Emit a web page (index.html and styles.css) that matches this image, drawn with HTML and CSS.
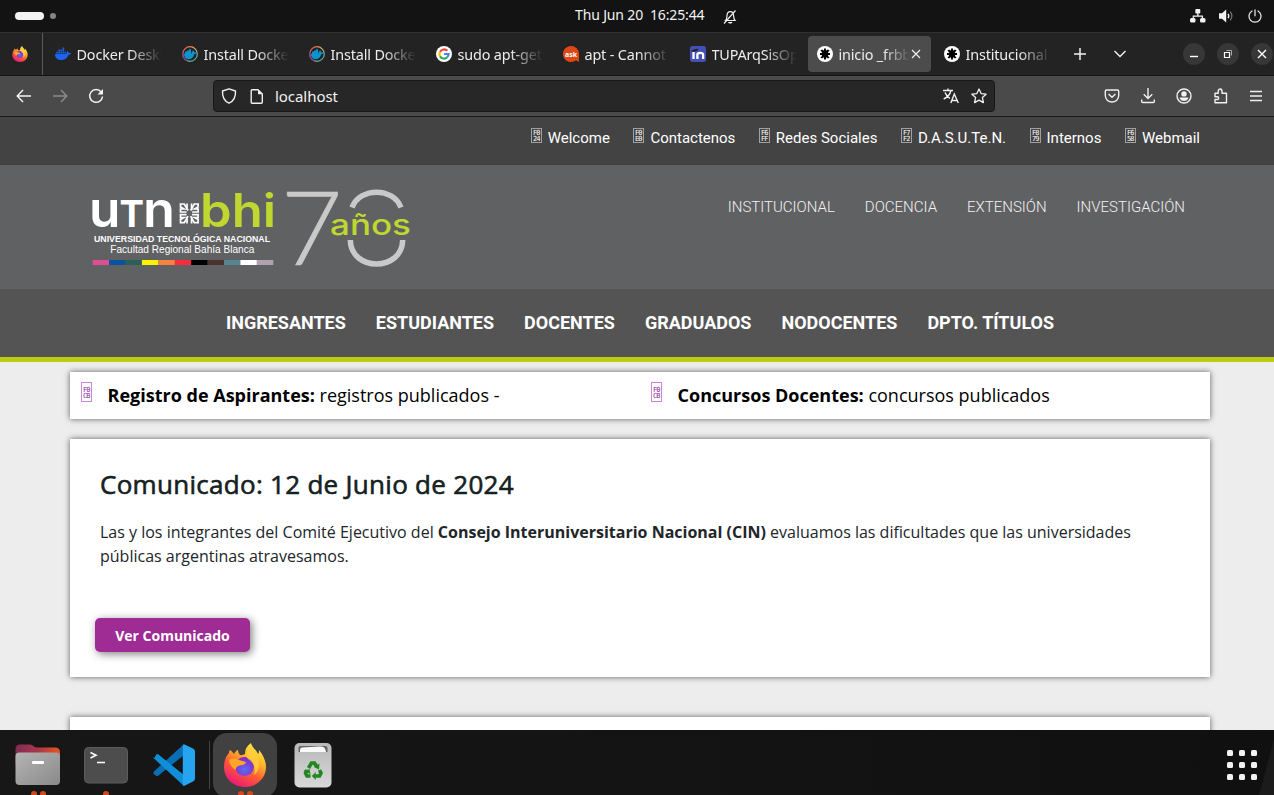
FILE: index.html
```html
<!DOCTYPE html>
<html lang="es">
<head>
<meta charset="utf-8">
<title>inicio _frbb</title>
<link rel="stylesheet" href="styles.css">
</head>
<body>
<svg class="defs" width="0" height="0" aria-hidden="true">
  <defs>
    <linearGradient id="flame" x1="0.8" y1="0" x2="0.25" y2="1"><stop offset="0" stop-color="#fff44f"/><stop offset=".35" stop-color="#ffb02a"/><stop offset=".62" stop-color="#ff5a36"/><stop offset="1" stop-color="#e9127c"/></linearGradient>
    <radialGradient id="globe" cx=".5" cy=".65" r=".6"><stop offset="0" stop-color="#5b6df0"/><stop offset="1" stop-color="#8a28c8"/></radialGradient>
    <linearGradient id="ring" x1="0" y1="0" x2="1" y2="1"><stop offset="0" stop-color="#e8384f"/><stop offset=".4" stop-color="#f2a65a"/><stop offset="1" stop-color="#19b5c9"/></linearGradient>
    <linearGradient id="folderBack" x1="0" x2="1"><stop offset="0" stop-color="#832b56"/><stop offset=".5" stop-color="#a8374b"/><stop offset="1" stop-color="#e95420"/></linearGradient>
    <linearGradient id="folderFront" x1="0" y1="0" x2="1" y2="1"><stop offset="0" stop-color="#b4b4b4"/><stop offset="1" stop-color="#8a8a8a"/></linearGradient>
    <linearGradient id="bin" x1="0" y1="0" x2="0" y2="1"><stop offset="0" stop-color="#b9b9b9"/><stop offset="1" stop-color="#d8d8d8"/></linearGradient>
    <symbol id="firefox" viewBox="0 0 42 44">
      <path fill="url(#flame)" d="M27 0c1 5 5 6 7 11 1-1 1-2 1-4 5 6 7 12 7 17 0 11-9 20-21 20S0 35 0 24c0-7 3-12 5-14 0-1 0-2 1-3 2 1 3 3 4 4 1-2 3-4 4-4 0 2 1 4 2 5 2 0 3 0 5-1 0-5 2-8 6-11z"/>
      <circle cx="20.500" cy="23.500" r="9.500" fill="url(#globe)"/>
      <path fill="#ffa629" d="M5 17c3-2 7-2 10 0l7 2c-1 3-4 3-6 3.500-3 .5-4 2-4.500 4.500C8.500 25 5 21 5 17z"/>
      <path fill="#ffd23a" opacity=".8" d="M27 3c1 6 8 9 8 19 0 4-2 8-5 10 2-8-1-13-6-16-3-4-1-9 3-13z"/>
    </symbol>
    <symbol id="whale" viewBox="0 0 16 16">
      <path d="M0 8h11.500c.2-1 .1-2 .8-3 1 .5 1.400 1.200 1.500 2 .8-.1 1.600 0 2.200.4-.4 1-1.300 1.300-2.500 1.300C12.500 11.500 10.500 14 6.500 14 2.500 14 0 12 0 8zM1.200 5.700h1.700v1.700H1.200zM3.300 5.700H5v1.700H3.300zM5.400 5.700h1.700v1.700H5.400zM7.500 5.700h1.700v1.700H7.500zM3.300 3.600H5v1.700H3.300zM5.400 3.600h1.700v1.700H5.400zM7.500 3.600h1.700v1.700H7.500zM7.500 1.500h1.700v1.700H7.500zM9.600 5.700h1.500v1.700H9.600z"/>
    </symbol>
    <symbol id="dockerdocs" viewBox="0 0 16 16">
      <circle cx="8" cy="8" r="7.300" fill="none" stroke="url(#ring)" stroke-width="1.200"/>
      <path fill="none" stroke="#703a94" stroke-width="1.200" d="M1.200 5.400A7.300 7.300 0 0 0 5 14.700"/>
      <path fill="#0d93ce" d="M2 7.800h7.500V6.300l1.700-2 1.200 2 2 .2c-.3 1.200-1 1.600-2.200 1.700-1 3.300-2.700 5-5.400 5C3.800 13.200 2 11 2 7.800zM3.500 5.500H5V4.500h2V3.200h2V8H3V6z"/>
    </symbol>
    <symbol id="spider" viewBox="0 0 16 16">
      <circle cx="8" cy="8" r="8" fill="#fff"/>
      <path fill="none" stroke="#000" stroke-width="1.900" d="M8 2.500v11M3 8h10M4.300 4c1 2.200 6.400 2.200 7.400 0M4.300 12c1-2.200 6.400-2.200 7.400 0"/>
      <circle cx="8" cy="8" r="3.300"/>
    </symbol>
  </defs>
</svg>

<header class="topbar">
  <div class="workspaces"><i class="pill"></i><i class="dot"></i></div>
  <div class="clock"><span class="clock-text">Thu Jun 20&nbsp; 16:25:44</span>
    <svg class="bell" width="14" height="16" viewBox="0 0 14 16"><path fill="none" stroke="#eee" stroke-width="1.200" d="M2.500 11.500c1.500-1.500 1.300-3 1.500-5C4.200 4 5.500 2.600 7.300 2.600S10.500 4 10.600 6.500c.1 2 0 3.500 1.400 5zM1 14.500 12.500 1.500"/><path fill="#eee" d="M5 13h4.500c-.5 2-4 2-4.500 0z"/></svg>
  </div>
  <div class="status">
    <svg width="16" height="14" viewBox="0 0 16 14" fill="#f2f2f2"><rect x="5.300" y="0" width="5" height="4.500" rx="1"/><rect x="0" y="9" width="5.500" height="4.500" rx="1.500"/><rect x="10" y="9" width="5.500" height="4.500" rx="1.500"/><path d="M7.200 4h1.300v2.500H13V9h-1.200V7.700H3.900V9H2.700V6.500h4.500z"/></svg>
    <svg width="16" height="14" viewBox="0 0 16 14"><path fill="#f2f2f2" d="M0 4.300h3L7.200.5v13L3 9.700H0z"/><path fill="none" stroke="#f2f2f2" stroke-width="1.300" d="M9 4.800q1.600 2.200 0 4.400"/><path fill="none" stroke="#777" stroke-width="1.200" d="M11.200 2.600q3.400 4.400 0 8.800"/></svg>
    <svg width="14" height="14" viewBox="0 0 14 14"><path fill="none" stroke="#f2f2f2" stroke-width="1.200" stroke-linecap="round" d="M7 .8v6M4 2A6 6 0 1 0 10 2"/></svg>
  </div>
</header>

<nav class="tabs">
  <div class="pinned"><svg width="16" height="16"><use href="#firefox"/></svg></div>
  <div class="tab"><svg width="16" height="16" fill="#1d63ed"><use href="#whale"/></svg><span class="label">Docker Desktop</span></div>
  <div class="tab"><svg width="16" height="16"><use href="#dockerdocs"/></svg><span class="label">Install Docker</span></div>
  <div class="tab"><svg width="16" height="16"><use href="#dockerdocs"/></svg><span class="label">Install Docker</span></div>
  <div class="tab"><svg width="16" height="16" viewBox="0 0 16 16"><circle cx="8" cy="8" r="8" fill="#fff"/><g fill="none" stroke-width="2.200"><path stroke="#ea4335" d="M11.300 4.800A4.600 4.600 0 0 0 4 5.800"/><path stroke="#fbbc05" d="M4 5.800a4.600 4.600 0 0 0 0 4.400"/><path stroke="#34a853" d="M4 10.200a4.600 4.600 0 0 0 7.200 1.100"/><path stroke="#4285f4" d="M8 8h4.600a4.600 4.600 0 0 1-1.500 3.300"/></g></svg><span class="label">sudo apt-get</span></div>
  <div class="tab"><svg width="16" height="16" viewBox="0 0 16 16"><path fill="#dd4814" d="M8 0a8 8 0 0 1 8 8v8l-3-1.800A8 8 0 1 1 8 0z"/><text x="2" y="10.500" class="ask" textLength="12" lengthAdjust="spacingAndGlyphs">ask</text></svg><span class="label">apt - Cannot f</span></div>
  <div class="tab"><svg width="16" height="16" viewBox="0 0 16 16"><rect width="16" height="16" rx="2.500" fill="#4351b5"/><path fill="#222" d="M1 4.500 7 2.700l2 1.200-6 2z"/><path fill="none" stroke="#fff" stroke-width="2.300" d="M3.500 6v7M7.400 13V8.600q0-1.700 2.800-1.700t2.900 1.700V13"/></svg><span class="label">TUPArqSisOp</span></div>
  <div class="tab active"><svg width="16" height="16"><use href="#spider"/></svg><span class="label">inicio _frbb</span><svg class="close" width="10" height="10" viewBox="0 0 10 10"><path stroke="#eee" stroke-width="1.200" d="m1 1 8 8M9 1 1 9"/></svg></div>
  <div class="tab"><svg width="16" height="16"><use href="#spider"/></svg><span class="label">Institucional</span></div>
  <svg class="plus" width="12" height="12" viewBox="0 0 12 12"><path stroke="#f2f2f2" stroke-width="1.500" d="M6 0v12M0 6h12"/></svg>
  <svg class="chevron" width="12" height="8" viewBox="0 0 12 8"><path fill="none" stroke="#f2f2f2" stroke-width="1.400" d="m.5 1 5.500 5.500L11.500 1"/></svg>
  <div class="winbtns">
    <span class="winbtn"><svg width="10" height="10"><path stroke="#fff" stroke-width="1.400" d="M1 7.500h8"/></svg></span>
    <span class="winbtn"><svg width="10" height="10" viewBox="0 0 10 10"><path fill="none" stroke="#fff" stroke-width="1.200" d="M1.500 3.500h5v5h-5z"/><path fill="none" stroke="#aaa" d="M3.500 1.500h5v5"/></svg></span>
    <span class="winbtn"><svg width="10" height="10" viewBox="0 0 10 10"><path stroke="#fff" stroke-width="1.400" d="m1 1 8 8M9 1 1 9"/></svg></span>
  </div>
</nav>

<div class="toolbar">
  <div class="history">
    <svg width="16" height="14" viewBox="0 0 16 14"><path fill="none" stroke="#f5f5f5" stroke-width="1.400" d="M15 7H1.500M7 1 1.200 7 7 13"/></svg>
    <svg width="16" height="14" viewBox="0 0 16 14"><path fill="none" stroke="#8c8c8c" stroke-width="1.400" d="M1 7h13.500M9 1l5.800 6L9 13"/></svg>
    <svg width="16" height="16" viewBox="0 0 16 16"><path fill="none" stroke="#f5f5f5" stroke-width="1.500" d="M13.200 4A6.400 6.400 0 1 0 14.500 8.500"/><path fill="#f5f5f5" d="M15 1v5.500H9.500z"/></svg>
  </div>
  <div class="urlbar">
    <svg width="16" height="16" viewBox="0 0 16 16"><path fill="none" stroke="#f0f0f0" stroke-width="1.400" stroke-linejoin="round" d="M8 .8 14.500 3c.3 6-1.500 10-6.500 12.200C3 13 1.200 9 1.500 3z"/></svg>
    <svg class="page" width="14" height="15" viewBox="0 0 14 15"><path fill="none" stroke="#f0f0f0" stroke-width="1.400" stroke-linejoin="round" d="M2.200.8H8L12.300 5v8.200q0 1-1 1H2.200q-1 0-1-1V1.800q0-1 1-1z"/><path fill="#f0f0f0" d="M8 .8 12.500 5.300H8z"/></svg>
    <span class="url">localhost</span>
    <svg class="translate" width="17" height="16" viewBox="0 0 17 16"><path fill="none" stroke="#f0f0f0" stroke-width="1.400" d="M0 2.500h10M5 .5v2M8 2.500C7 6.500 4 9.500.7 11M2 4.500c1 2.700 3 4.700 5 6M7.800 15l3.500-9 4 9M9 12.500h5"/></svg>
    <svg width="16" height="16" viewBox="0 0 16 16"><path fill="none" stroke="#f0f0f0" stroke-width="1.300" stroke-linejoin="round" d="m8 1 2.100 4.600 5 .6-3.700 3.400 1 5L8 12.100l-4.400 2.500 1-5L.9 6.200l5-.6z"/></svg>
  </div>
  <div class="actions">
    <svg width="16" height="16" viewBox="0 0 16 16"><path fill="none" stroke="#f0f0f0" stroke-width="1.400" stroke-linejoin="round" d="M2.500 2h11q1.200 0 1.200 1.200V7.500c0 4-3 6.500-6.700 6.500S1.300 11.500 1.300 7.500V3.200Q1.300 2 2.500 2zM4.500 6 8 9.300 11.500 6"/></svg>
    <svg width="16" height="16" viewBox="0 0 16 16"><path fill="none" stroke="#f0f0f0" stroke-width="1.400" d="M8 0v10.500M3.700 6.200 8 10.500l4.300-4.300M1.700 11.500v2q0 1 1 1h10.600q1 0 1-1v-2"/></svg>
    <svg width="16" height="16" viewBox="0 0 16 16"><circle cx="8" cy="8" r="7" fill="none" stroke="#f0f0f0" stroke-width="1.400"/><circle cx="8" cy="5.900" r="2.700" fill="#f0f0f0"/><path fill="#f0f0f0" d="M3.500 9.500h9q-1 3.500-4.500 3.500T3.500 9.500z"/></svg>
    <svg width="16" height="16" viewBox="0 0 16 16"><path fill="none" stroke="#f0f0f0" stroke-width="1.400" stroke-linejoin="round" d="M2 5.200h3.200V3.500C5.200.2 9 .2 9 3.500v1.700h4.500v9.600H2v-3.300h2.200c2 0 2-2.700 0-2.700H2z"/></svg>
    <svg width="14" height="16" viewBox="0 0 14 16"><path stroke="#f0f0f0" stroke-width="1.300" d="M1 3.500h12M1 8h12M1 12.500h12"/></svg>
  </div>
</div>

<main class="site">
  <ul class="quick">
    <li><svg class="tofu" viewBox="0 0 11 15"><rect x=".5" y=".5" width="10" height="14"/><text x="2" y="7" textLength="7.500">F0</text><text x="2" y="13" textLength="7.500">24</text></svg><span>Welcome</span></li>
    <li><svg class="tofu" viewBox="0 0 11 15"><rect x=".5" y=".5" width="10" height="14"/><text x="2" y="7" textLength="7.500">F0</text><text x="2" y="13" textLength="7.500">E0</text></svg><span>Contactenos</span></li>
    <li><svg class="tofu" viewBox="0 0 11 15"><rect x=".5" y=".5" width="10" height="14"/><text x="2" y="7" textLength="7.500">F6</text><text x="2" y="13" textLength="7.500">FF</text></svg><span>Redes Sociales</span></li>
    <li><svg class="tofu" viewBox="0 0 11 15"><rect x=".5" y=".5" width="10" height="14"/><text x="2" y="7" textLength="7.500">F7</text><text x="2" y="13" textLength="7.500">F2</text></svg><span>D.A.S.U.Te.N.</span></li>
    <li><svg class="tofu" viewBox="0 0 11 15"><rect x=".5" y=".5" width="10" height="14"/><text x="2" y="7" textLength="7.500">F8</text><text x="2" y="13" textLength="7.500">79</text></svg><span>Internos</span></li>
    <li><svg class="tofu" viewBox="0 0 11 15"><rect x=".5" y=".5" width="10" height="14"/><text x="2" y="7" textLength="7.500">F6</text><text x="2" y="13" textLength="7.500">58</text></svg><span>Webmail</span></li>
  </ul>

  <div class="brand">
    <svg class="logo" width="340" height="95" viewBox="80 180 340 95">
      <g class="utn">
        <text x="89" y="226.500" textLength="31.500" lengthAdjust="spacingAndGlyphs">u</text>
        <text class="t" x="119.500" y="226.500" textLength="24.500" lengthAdjust="spacingAndGlyphs">T</text>
        <text x="143" y="226.500" textLength="32" lengthAdjust="spacingAndGlyphs">n</text>
      </g>
      <g fill="none" stroke="#fff" stroke-width="1.700">
        <path id="lobe" d="M188 210.500 184.300 204H180.500V207L184 209H180.500V212H186.500"/>
        <use href="#lobe" transform="matrix(-1 0 0 1 378.600 0)"/>
        <use href="#lobe" transform="matrix(1 0 0 -1 0 426.600)"/>
        <use href="#lobe" transform="matrix(-1 0 0 -1 378.600 426.600)"/>
        <path d="M187 208.500v-5M191.600 208.500v-5M187 218.500v5M191.600 218.500v5"/>
      </g>
      <text class="bhi" x="200" y="226.500" textLength="76" lengthAdjust="spacingAndGlyphs">bhi</text>
      <text class="uni" x="94" y="242.300" textLength="176" lengthAdjust="spacingAndGlyphs">UNIVERSIDAD TECNOLÓGICA NACIONAL</text>
      <text class="fac" x="110.300" y="253.300" textLength="144" lengthAdjust="spacingAndGlyphs">Facultad Regional Bahía Blanca</text>
      <g>
        <path fill="#dd4e93" d="M92.700 260h16.500v5H92.700z"/><path fill="#0b51a1" d="M109.100 260h16.500v5h-16.500z"/><path fill="#2d5f59" d="M125.500 260h16.500v5h-16.500z"/><path fill="#fff200" d="M141.900 260h16.500v5h-16.500z"/><path fill="#f58243" d="M158.400 260h16.500v5h-16.500z"/><path fill="#fb2a3c" d="M174.800 260h16.500v5h-16.500z"/><path fill="#000" d="M191.200 260h16.500v5h-16.500z"/><path fill="#4b322e" d="M207.600 260h16.500v5h-16.500z"/><path fill="#558492" d="M224 260h16.500v5H224z"/><path fill="#fff" d="M240.400 260h16.500v5h-16.500z"/><path fill="#b2a2b0" d="M256.800 260h16.500v5h-16.500z"/>
      </g>
      <text class="seven" x="280.500" y="265" textLength="62" lengthAdjust="spacingAndGlyphs">7</text>
      <path fill="none" stroke="#c9c9c9" stroke-width="5.500" d="M352 207.500C360 187 393 187 401 207.500M350.300 240C351 272 402 272 402.700 240"/>
      <text class="anos" x="330" y="235" textLength="81" lengthAdjust="spacingAndGlyphs">años</text>
    </svg>
    <ul class="sections"><li>INSTITUCIONAL</li><li>DOCENCIA</li><li>EXTENSIÓN</li><li>INVESTIGACIÓN</li></ul>
  </div>

  <ul class="mainnav"><li>INGRESANTES</li><li>ESTUDIANTES</li><li>DOCENTES</li><li>GRADUADOS</li><li>NODOCENTES</li><li>DPTO. TÍTULOS</li></ul>

  <div class="content">
    <section class="card notices">
      <div class="notice"><svg class="tofu tall" viewBox="0 0 11 20"><rect x=".5" y=".5" width="10" height="19"/><text x="2" y="10" textLength="7.500">F0</text><text x="2" y="16" textLength="7.500">CB</text></svg><p><b>Registro de Aspirantes:</b> registros publicados -</p></div>
      <div class="notice"><svg class="tofu tall" viewBox="0 0 11 20"><rect x=".5" y=".5" width="10" height="19"/><text x="2" y="10" textLength="7.500">F0</text><text x="2" y="16" textLength="7.500">CB</text></svg><p><b>Concursos Docentes:</b> concursos publicados</p></div>
    </section>
    <section class="card release">
      <h2>Comunicado: 12 de Junio de 2024</h2>
      <p>Las y los integrantes del Comité Ejecutivo del <b>Consejo Interuniversitario Nacional (CIN)</b> evaluamos las dificultades que las universidades públicas argentinas atravesamos.</p>
      <button class="cta">Ver Comunicado</button>
    </section>
    <section class="card next"></section>
  </div>
</main>

<footer class="dock">
  <div class="app two"><svg width="46" height="42" viewBox="0 0 46 42"><path fill="url(#folderBack)" d="M.5 5q0-4.500 4.500-4.500h10q2 0 3.500 1.500T22 3.500h18q5 0 5 5V20H.5z"/><rect x=".5" y="8.500" width="44.500" height="32.500" rx="4" fill="url(#folderFront)"/><rect x="17" y="17" width="12" height="3" rx="1" fill="#fff"/></svg></div>
  <div class="app one"><svg width="44" height="42" viewBox="0 0 44 42"><rect x=".5" y="3.500" width="43" height="35.500" rx="4" fill="#4d4d4d" stroke="#5c5c5c"/><path fill="none" stroke="#fff" stroke-width="1.600" d="m6.500 8.500 5.500 2.800L6.500 14M13 18.500h8"/></svg></div>
  <div class="app"><svg width="42" height="42" viewBox="0 0 42 42"><path fill="#0a6eb5" d="M0 29.500 3.500 32q.8.500 1.600-.2L31 11V0L1 27.500q-1 1 0 2z"/><path fill="#108ed8" d="M1 14.500 3.500 10.200q.8-.5 1.600.1L31 31v11L1 14.500q-1-1 0-2z"/><path fill="#25a5ef" d="M31 .2 40 4.500q2 1 2 3v27q0 2-2 3L31 42q-1.200-.6-1.200-2V2q0-1.400 1.200-1.800z"/></svg></div>
  <i class="sep"></i>
  <div class="app two current"><svg width="42" height="44"><use href="#firefox"/></svg></div>
  <div class="app"><svg width="38" height="46" viewBox="0 0 38 46"><rect x=".5" y="1" width="37" height="44.500" rx="5" fill="url(#bin)"/><path fill="#666" d="M4.500 10V6q0-2 2-2h25q2 0 2 2v4z"/><path fill="#f8f8f8" d="M6 10c0-3 0-4 2-4.500L25 4.500c5 0 6 1 7 5.500z"/><g fill="none" stroke="#20861f" stroke-width="3.600"><path d="m14.500 26 3-5h3l2 3.500M25.500 28l1.500 3-1.500 3h-4M16.500 34H13l-1.500-3 1.500-3"/></g><path fill="#20861f" d="m25.500 21.500-.5 6-5-2.500zM21.800 30v8l-4-4zM9.500 28.500l6-1.200 1 5z"/></svg></div>
  <svg class="grid" width="30" height="30" viewBox="0 0 30 30" fill="#f2f2f2"><rect width="6" height="6" rx="1.500"/><rect x="12" width="6" height="6" rx="1.500"/><rect x="24" width="6" height="6" rx="1.500"/><rect y="12" width="6" height="6" rx="1.500"/><rect x="12" y="12" width="6" height="6" rx="1.500"/><rect x="24" y="12" width="6" height="6" rx="1.500"/><rect y="24" width="6" height="6" rx="1.500"/><rect x="12" y="24" width="6" height="6" rx="1.500"/><rect x="24" y="24" width="6" height="6" rx="1.500"/></svg>
</footer>
</body>
</html>
```
FILE: styles.css
```css
* { box-sizing: border-box; }
body { margin: 0; width: 1274px; height: 795px; overflow: hidden; display: flex; flex-direction: column; background: #ededed; font-family: "Open Sans", sans-serif; }
ul { list-style: none; margin: 0; padding: 0; }
svg { display: block; flex: none; }
.defs { position: absolute; }

/* Desktop top bar */
.topbar { flex: none; height: 33px; background: #131313; border-bottom: 1px solid #303030; display: grid; grid-template-columns: 575px 1fr auto; align-items: center; padding-right: 12px; color: #f2f2f2; font-family: "Noto Sans", sans-serif; }
.workspaces { display: flex; align-items: center; gap: 6px; padding-left: 15px; }
.pill { width: 29px; height: 8px; border-radius: 4px; background: #f2f2f2; }
.dot { width: 6px; height: 6px; border-radius: 50%; background: #858585; }
.clock { display: flex; align-items: center; font-size: 14px; line-height: 30px; }
.clock-text { width: 148px; white-space: nowrap; letter-spacing: -0.15px; padding-bottom: 2px; }
.bell { margin-top: 2px; }
.status { display: flex; align-items: center; gap: 13px; }

/* Tab strip */
.tabs { flex: none; height: 43px; background: #232323; border-bottom: 1px solid #131313; display: flex; align-items: center; color: #ededed; font-family: "Noto Sans", sans-serif; }
.pinned { width: 43px; height: 42px; padding-left: 12px; border-right: 1px solid #5a5a5a; margin-right: 3px; display: flex; align-items: center; flex: none; }
.tab { flex: none; width: 123px; height: 36px; margin-right: 4px; padding-left: 8.500px; border-radius: 4px; display: flex; align-items: center; gap: 6px; }
.label { width: 85px; overflow: hidden; white-space: nowrap; font-size: 14.400px; line-height: 24px; letter-spacing: -0.15px; padding-top: 1px; -webkit-mask-image: linear-gradient(90deg, #000 62%, transparent 100%); mask-image: linear-gradient(90deg, #000 62%, transparent 100%); }
.ask { fill: #fff; font: 700 7.500px "Noto Sans", sans-serif; }
.active { background: #4c4c4c; }
.active .label { width: 71px; flex: none; }
.close { margin-left: -5px; }
.plus { margin-left: 12px; }
.chevron { margin-left: 28px; }
.winbtns { display: flex; gap: 12px; margin-left: 57px; }
.winbtn { width: 22px; height: 22px; border-radius: 50%; background: #373737; display: flex; align-items: center; justify-content: center; }

/* Address bar */
.toolbar { flex: none; height: 41px; background: #4a4a4a; border-bottom: 1px solid #1c1c1c; display: flex; align-items: center; padding-left: 16px; }
.history { display: flex; align-items: center; gap: 20px; width: 197px; }
.urlbar { width: 782px; height: 32px; background: #272727; border: 1px solid #171717; border-radius: 4px; display: flex; align-items: center; padding: 0 7px; }
.page { margin-left: 13px; }
.url { margin-left: 11px; color: #f2f2f2; font: 15px "Noto Sans", sans-serif; letter-spacing: -0.05px; padding-bottom: 1px; }
.translate { margin-left: auto; margin-right: 11px; }
.actions { display: flex; align-items: center; gap: 20.200px; margin-left: 109px; }

/* Site */
.site { flex: 1; min-height: 0; overflow: hidden; }
.quick { height: 48px; background: #434343; display: flex; justify-content: flex-end; gap: 23.500px; padding: 7px 74px 0 0; color: #fff; font: 15px/28px Roboto, sans-serif; }
.quick li { display: flex; gap: 6px; }
.tofu { width: 11px; height: 15px; margin-top: 4px; fill: #fff; font: 7px "DejaVu Sans Mono", monospace; }
.tofu rect { fill: none; stroke: #a0a0a0; }
.tofu.tall { height: 20px; margin-top: 0; fill: #8b2298; }
.tofu.tall rect { stroke: #cb88d2; }
.brand { height: 124px; background: #606163; display: flex; justify-content: space-between; padding: 15px 89px 0 80px; }
.utn { fill: #fff; font: 600 48.500px Inter, sans-serif; }
.t { font-size: 36.500px; font-weight: 700; }
.bhi { fill: #bfd730; font: 600 46px Inter, sans-serif; }
.uni { fill: #fff; font: 700 9.800px "Liberation Sans", sans-serif; }
.fac { fill: #fff; font: 10.500px "Liberation Sans", sans-serif; }
.seven { fill: #c9c9c9; font: 300 103px Lato, sans-serif; stroke: #c9c9c9; stroke-width: .6px; }
.anos { fill: #bfd730; font: 500 28px Inter, sans-serif; }
.sections { display: flex; gap: 30px; padding-top: 1px; color: #f2f2f2; font: 300 15px/52px Roboto, sans-serif; }
.mainnav { height: 73px; background: #545454; border-bottom: 5px solid #bdcc10; display: flex; justify-content: center; gap: 30px; padding-left: 6px; color: #fff; font: 700 18px/67px Roboto, sans-serif; }
.content { padding: 10px 64px 0 70px; }
.card { background: #fff; box-shadow: 0 0 6px rgba(0,0,0,.6); }
.notices { height: 47px; display: grid; grid-template-columns: 1fr 1fr; color: #000; font-size: 18px; line-height: 26px; }
.notice { display: flex; gap: 15.600px; padding: 10px 0 0 11px; }
.notice p { margin: 0; }
b { font-weight: 700; }
.release { height: 238px; margin-top: 20px; padding: 29px 30px 0; color: #212529; }
.release h2 { margin: 0; font-size: 26px; line-height: 32px; font-weight: 400; letter-spacing: 0.29px; -webkit-text-stroke: 0.6px #14211f; color: #14211f; }
.release p { margin: 20px 0 0; font-size: 16px; line-height: 24px; }
.cta { display: block; width: 155px; height: 34px; margin: 50px 0 0 -5px; padding: 0; border: 0; border-radius: 5px; background: #9f2b94; color: #fff; font: 700 14px "Open Sans", sans-serif; box-shadow: 2px 2px 8px rgba(0,0,0,.5); }
.next { height: 60px; margin-top: 40px; }

/* Dock */
.dock { flex: none; height: 65px; display: flex; gap: 4px; padding: 3px 17px 0 6px; background: linear-gradient(105deg, transparent 98.800%, #1b1b1b 98.900%), linear-gradient(90deg, #171717, #101010); overflow: hidden; }
.app { position: relative; flex: none; width: 64px; height: 64px; border-radius: 14px; display: flex; align-items: center; justify-content: center; }
.current { background: #414141; }
.sep { width: 1px; height: 48px; margin: 8px -1px 0; background: #444; }
.one::after, .two::after { content: ""; position: absolute; left: 29px; top: 58px; width: 6px; height: 6px; border-radius: 50%; background: #d4481a; }
.two::after { left: 24.500px; box-shadow: 9px 0 #d4481a; }
.grid { margin: 17px 0 0 auto; }
```
